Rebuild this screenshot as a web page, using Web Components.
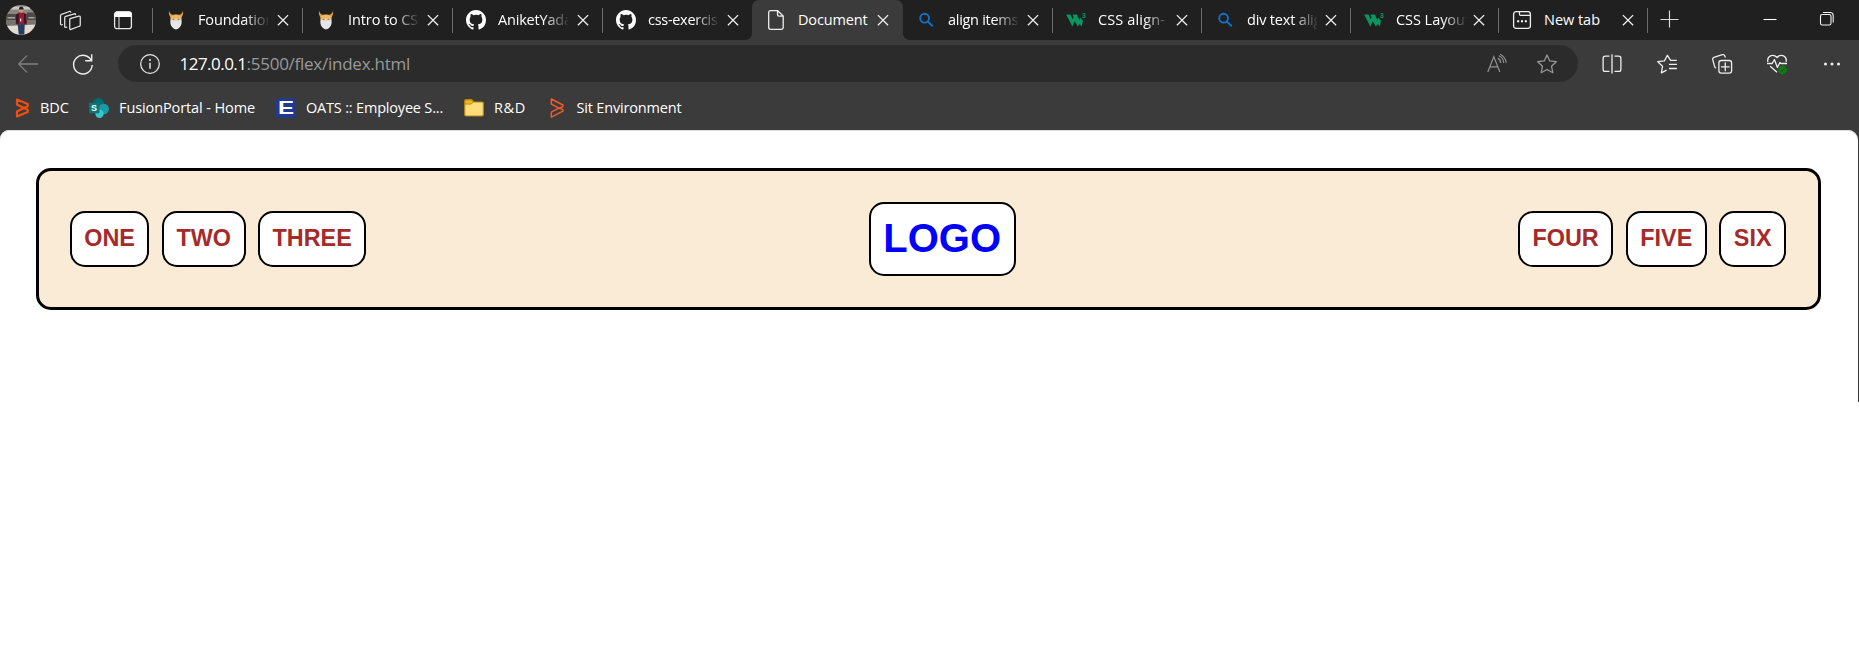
<!DOCTYPE html>
<html lang="en">
<head>
<meta charset="utf-8">
<title>Document</title>
<style>
body{margin:0;background:#fff;font-family:"Open Sans","Noto Sans",sans-serif;overflow:hidden}
</style>
</head>
<body>
<browser-window></browser-window>
<script>
const define=(name,css,html)=>customElements.define(name,class extends HTMLElement{
  constructor(){super();this.attachShadow({mode:'open'}).innerHTML=`<style>${css}</style>${html}`}
});

/* Icon drawings, each on a 20x20 grid */
const ICONS={
  avatar:`<defs><clipPath id="c"><circle cx="10" cy="10" r="10"/></clipPath></defs><g clip-path="url(#c)"><path fill="#8d8781" d="M0 0h20v20H0z"/><path fill="#c9c5c0" d="M3 1h13v2H3z"/><path fill="#4d4947" d="M0 6h7v5H0zM14 5h6v6h-6z"/><path fill="#a9a6a2" d="M1 8h5v1H1zM15 8h4v1h-4z"/><path fill="#77736f" d="M0 10h20v4H0z"/><path fill="#e2dbd2" d="M0 14l20-1V20H0z"/><path fill="#8c1f33" d="M7.200 5.600q3-1.400 5.800 0l.8 7.400H6.800z"/><path fill="#3c1220" d="M6.800 6h1.700v6.500H6.500zM12 6h1.700v6.500H12.200z"/><path fill="#f2e9e6" d="M9.300 9h.9v2h-.9z"/><circle cx="10.200" cy="3.600" r="1.500" fill="#c49a84"/><path fill="#222" d="M8.600 3q.2-2 1.600-2t1.600 2z"/><path fill="#253c5e" d="M7.800 12.800h4.700l-.3 7H8.500z"/></g>`,
  work:`<g fill="none" stroke="#e4e4e4" stroke-width="1.200" stroke-linejoin="round" stroke-linecap="round"><path d="M9.600 8.200l8.400-2.300q1.300-.3 1.300 1v7.400q0 .9-1 1.200l-7.800 3q-1.200.4-1.200-.9V9.300q0-.9.800-1.100z"/><path d="M6.400 16.400l-.9.200q-1 .1-1-.9V7.300q0-.9.900-1.200l8.300-2.500q1-.2 1.200.7M2.200 14l-.7.100q-1 .1-1-.9V5.300q0-.9.900-1.200L9 1.400q1-.3 1.200.6"/></g>`,
  panel:`<rect x="1.600" y="1.900" width="16.800" height="16.800" rx="2.500" fill="none" stroke="#e8e8e8" stroke-width="1.300"/><path d="M1.500 7V4.200q0-2.600 2.600-2.600h11.800q2.600 0 2.600 2.600V7z" fill="#fff"/><path d="M6 7v11.500" stroke="#ddd" stroke-width="1.100"/>`,
  odin:`<path fill="#dd9f45" d="M3 .5q.3 3 3 4.200h8Q16.700 3.500 17 .5q.8 4-1.200 6.800L15.500 10h-11L4.200 7.300Q2.200 4.500 3 .5z"/><path fill="#f2b65a" d="M5 6.500q5-4 10 0l-.8 2.500H5.800z"/><path fill="#ead4bd" d="M5 8.500h10v3H5z"/><path fill="#e6e6e6" d="M4.500 9.500q3 2 5.500 1.500 2.500.5 5.500-1.500.7 5-1.500 7.500-1.800 2.400-4 2.500-2.200-.1-4-2.500-2.200-2.500-1.500-7.500z"/><path fill="#8a6650" d="M6.500 8.700h2v1h-2zM11.500 8.700h2v1h-2z"/>`,
  github:`<path fill="#fff" transform="scale(1.25)" d="M8 0C3.580 0 0 3.580 0 8c0 3.540 2.290 6.530 5.470 7.590.4.070.55-.17.55-.38v-1.490c-2.010.37-2.530-.49-2.690-.94-.09-.23-.48-.94-.82-1.130-.28-.15-.68-.52-.01-.53.63-.01 1.080.58 1.230.82.72 1.210 1.870.87 2.330.66.070-.52.28-.87.51-1.070-1.780-.2-3.640-.89-3.640-3.950 0-.87.31-1.590.82-2.150-.08-.2-.36-1.020.08-2.120 0 0 .67-.21 2.200.82A7.600 7.600 0 0 1 8 3.860c.68 0 1.360.09 2 .27 1.530-1.040 2.200-.82 2.200-.82.44 1.100.16 1.920.08 2.120.51.56.82 1.270.82 2.150 0 3.070-1.870 3.750-3.650 3.950.29.25.54.73.54 1.480v2.200c0 .21.15.46.55.38A8 8 0 0 0 16 8c0-4.420-3.580-8-8-8z"/>`,
  doc:`<path d="M4.500.7h7.200L17.200 6v11.500q0 1.800-1.800 1.800H4.500q-1.800 0-1.800-1.800v-15Q2.700.7 4.500.7zM11.500.9v3.600q0 1.600 1.600 1.600h3.900" fill="none" stroke="#eee" stroke-width="1.300"/>`,
  search:`<g fill="none" stroke="#1272c9" stroke-width="1.900" stroke-linecap="round"><circle cx="8.600" cy="8.200" r="4.400"/><path d="M12 11.700l4.300 4"/></g>`,
  w3:`<path fill="#059862" d="M.2 4.600h4.200l2.200 4.600 1-2-1-2.600h4.200l2.700 5.600 1-2.600 2.400 3.200-1.200 5.700-2.100-2.600-1.700 2.700-3.100-5.400-2.500 5.200z"/><text x="16" y="8" font-family="Liberation Sans,sans-serif" font-size="6.800" font-weight="700" fill="#059862">3</text>`,
  newtab:`<rect x="1.600" y="1.700" width="16.800" height="16.600" rx="2.500" fill="none" stroke="#eee" stroke-width="1.300"/><path d="M7.500 2v2.200q0 1.200 1.200 1.200H18" fill="none" stroke="#eee" stroke-width="1.200"/><path d="M5.200 10.200h2v2h-2zm3.800 0h2v2H9zm3.800 0h2v2h-2z" fill="#fff"/>`,
  close:`<path d="M4.900 5.100l10.200 10.200m0-10.200L4.900 15.300" stroke="#f0f0f0" stroke-width="1.300"/>`,
  plus:`<path d="M10.500 1.500v17M1.500 10.500h18" stroke="#ddd" stroke-width="1.150"/>`,
  min:`<path d="M3.500 10.500h13" stroke="#fff" stroke-width="1.100"/>`,
  restore:`<rect x="3.500" y="5.500" width="10.500" height="10.500" rx="1.800" fill="none" stroke="#f2f2f2" stroke-width="1.100"/><path d="M6 3.500h7.200q3 0 3 3v7" fill="none" stroke="#f2f2f2" stroke-width="1.100"/>`,
  back:`<path d="M20 10H.8M9.300 1.400L.7 10l8.600 8.600" fill="none" stroke="#808080" stroke-width="1.300"/>`,
  reload:`<path d="M18.500 7.100A9.300 9.300 0 1 0 19.200 11M18.700.3v6.500h-6.500" fill="none" stroke="#eee" stroke-width="1.400"/>`,
  info:`<circle cx="10" cy="10" r="9.300" fill="none" stroke="#e8e8e8" stroke-width="1.250"/><path d="M10 8.800v6" stroke="#fff" stroke-width="1.300"/><circle cx="10" cy="6" r=".9" fill="#fff"/>`,
  read:`<path d="M.8 18L6.800 2.600 12.800 18M3 12.800h7.700M10.700 4.400q3 1.300 3 4.600M11.800 1.800q4.700 2 4.900 7.200M13.200.2q5.500 2.800 6 8.600" fill="none" stroke="#929292" stroke-width="1.200"/>`,
  star:`<path d="M10 .9l2.800 6 6.500.8-4.800 4.500 1.300 6.500L10 15.500l-5.800 3.200 1.300-6.500L.7 7.700l6.500-.8z" fill="none" stroke="#999" stroke-width="1.250" stroke-linejoin="round"/>`,
  split:`<path d="M7.500 2.200H3.300Q1.100 2.200 1.100 4.400v10.800q0 2.200 2.200 2.200h4.200M12.500 2.200h4.200q2.200 0 2.200 2.200v10.800q0 2.200-2.200 2.200h-4.200" fill="none" stroke="#eee" stroke-width="1.300"/><path d="M10 .2v19.400" stroke="#eee" stroke-width="1.300"/>`,
  favs:`<path d="M19.800 6.300h-6.200l-3.200-5-3 5.600-6.600.8 4.700 4.600-1.100 6.600 5.200-2.700M12 10.300h7.900M12 14.500h7.900" fill="none" stroke="#eee" stroke-width="1.300" stroke-linejoin="round"/>`,
  coll:`<path d="M4 14.200q-1.200-.6-1.500-2L.7 5.700Q.3 4 1.900 3.300l8.400-2.600q1.900-.5 2.600 1.200l.5 1.600" fill="none" stroke="#eee" stroke-width="1.300"/><rect x="6.900" y="6.500" width="12.700" height="12.700" rx="2.400" fill="none" stroke="#eee" stroke-width="1.300"/><path d="M13.250 8.500v8.700M8.900 12.850h8.700" stroke="#eee" stroke-width="1.300"/>`,
  heart:`<path d="M.8 7.800Q.2 3.500 3.400 1.900 7 .3 10 3.500 13 .3 16.600 1.900q3.200 1.600 2.600 5.900M0 9.500h5.200l2.200-4 3 8 2.500-5 1.100 1H20M3.200 12.200l6.800 6.100" fill="none" stroke="#eee" stroke-width="1.300" stroke-linejoin="round"/><circle cx="15.600" cy="16" r="4.400" fill="#0f7b10"/><path d="M13.500 16.100l1.400 1.400 2.700-2.800" fill="none" stroke="#3a3a3a" stroke-width=".9"/>`,
  dots:`<g fill="#eee"><circle cx="3.500" cy="10" r="1.500"/><circle cx="10" cy="10" r="1.500"/><circle cx="16.500" cy="10" r="1.500"/></g>`,
  bmc:`<path d="M5 1.500l10.700 4.600v2.200L12 10 5 6.400zM5 18.500l10.700-4.600v-2.200L12 10l-7 3.600z" fill="none" stroke="#ee5010" stroke-width="2.200" stroke-linejoin="round"/>`,
  bmcLine:`<path d="M4.300 1l11.600 6v1.600L12 10.200 4.300 6zM4.300 19.200l11.600-6v-1.600L12 10l-7.700 4.200z" fill="none" stroke="#f2592a" stroke-width="1.500" stroke-linejoin="round"/>`,
  share:`<circle cx="9.500" cy="5.500" r="5.500" fill="#036c70"/><circle cx="14.700" cy="11" r="5.300" fill="#1a9ba1"/><circle cx="10.500" cy="15.800" r="4.200" fill="#37c6d0"/><rect y="4.700" width="10.400" height="10.600" rx="1" fill="#03787c"/><text x="5.100" y="13" text-anchor="middle" font-family="Liberation Sans,sans-serif" font-weight="700" font-size="9" fill="#fff">S</text>`,
  oats:`<rect width="20" height="20" rx="2.500" fill="#213a8f"/><text transform="translate(10 16.300) scale(1.300 1)" text-anchor="middle" font-family="Liberation Sans,sans-serif" font-weight="700" font-size="18.500" fill="#fff">E</text>`,
  folder:`<path d="M.7 3q0-1.300 1.300-1.300h5.600L9.700 4H18q1.400 0 1.400 1.400v11.200q0 1.400-1.400 1.400H2Q.7 18 .7 16.600z" fill="#ffdc7c" stroke="#b5860b" stroke-width="1.200"/><path d="M1 3q0-1 1-1h5.500l1.700 2-2 2.100H1z" fill="#f3b916" stroke="#b5860b" stroke-width=".9"/>`
};

customElements.define('ui-icon',class extends HTMLElement{
  connectedCallback(){
    if(this.shadowRoot)return;
    const s=this.getAttribute('size')||20;
    this.attachShadow({mode:'open'}).innerHTML=`<style>:host{display:block;flex:none;width:${s}px;height:${s}px}svg{display:block;overflow:visible}</style><svg width="${s}" height="${s}" viewBox="0 0 20 20">${ICONS[this.getAttribute('name')]}</svg>`;
  }
});

/* Label whose letter spacing is set so that the text takes the given width */
customElements.define('ui-label',class extends HTMLElement{
  connectedCallback(){
    if(this.shadowRoot)return;
    this.attachShadow({mode:'open'}).innerHTML=`<style>:host{display:inline-block;flex:none;white-space:nowrap}</style><slot></slot>`;
    const w=+this.getAttribute('w');
    if(w)this.style.letterSpacing=(w-this.getBoundingClientRect().width)/this.textContent.length+'px';
  }
});

customElements.define('browser-tab',class extends HTMLElement{
  connectedCallback(){
    if(this.shadowRoot)return;
    const a=this.hasAttribute('active'),f=this.hasAttribute('fade');
    this.attachShadow({mode:'open'}).innerHTML=`<style>
    :host{display:flex;position:relative;flex:none;box-sizing:border-box;width:${this.getAttribute('width')||150}px;height:40px;align-items:center;padding-left:14px;color:#fff;font-size:14.5px;line-height:20px}
    :host(:not([active]):not([first-after]))::before{content:"";position:absolute;left:0;top:8px;width:1px;height:25px;background:#6b6b6b}
    :host([active]){background:#3b3b3b;border-radius:7px 7px 0 0;margin-right:-1px}
    .f{position:absolute;bottom:0;width:6px;height:6px}
    .l{left:-6px;background:radial-gradient(circle at 0 0,transparent 5.5px,#3b3b3b 6px)}
    .r{right:-6px;background:radial-gradient(circle at 100% 0,transparent 5.5px,#3b3b3b 6px)}
    .t{width:70px;margin:-1px 0 0 12px;overflow:hidden;flex:none;${f?'-webkit-mask-image:linear-gradient(90deg,#000 46px,transparent 72px);mask-image:linear-gradient(90deg,#000 46px,transparent 72px)':''}}
    .x{margin-left:auto;padding-right:9px}:host([active]) .x{padding-right:10px}</style>
    <ui-icon name="${this.getAttribute('icon')}"></ui-icon><div class="t"><slot></slot></div><ui-icon class="x" name="close"></ui-icon>${a?'<i class="f l"></i><i class="f r"></i>':''}`;
  }
});

define('tab-strip',`:host{display:flex;height:40px;background:#202020;align-items:center;box-sizing:border-box;padding-left:6px}
.tools{display:flex;align-items:center;width:146px;flex:none}.av{margin-left:-.5px}.work{margin-left:24px}.panel{margin-left:32.500px}
.add{margin:-2px 0 0 11px}.win{margin:-2px 22.500px 0 auto;display:flex;gap:37px}`,
`<div class="tools"><ui-icon class="av" name="avatar" size="30"></ui-icon><ui-icon class="work" name="work" size="21"></ui-icon><ui-icon class="panel" name="panel" size="20"></ui-icon></div>
<browser-tab icon="odin" fade><ui-label w="83">Foundations</ui-label></browser-tab>
<browser-tab icon="odin" fade><ui-label w="78">Intro to CSS</ui-label></browser-tab>
<browser-tab icon="github" fade><ui-label w="81">AniketYadav</ui-label></browser-tab>
<browser-tab icon="github" fade><ui-label w="84">css-exercises</ui-label></browser-tab>
<browser-tab icon="doc" width="151" active><ui-label w="69.5">Document</ui-label></browser-tab>
<browser-tab icon="search" fade first-after><ui-label w="70">align items</ui-label></browser-tab>
<browser-tab icon="w3" width="149" fade><ui-label w="67">CSS align-</ui-label></browser-tab>
<browser-tab icon="search" width="149" fade><ui-label w="83">div text align</ui-label></browser-tab>
<browser-tab icon="w3" width="148" fade><ui-label w="74">CSS Layout</ui-label></browser-tab>
<browser-tab icon="newtab" width="149"><ui-label w="56">New tab</ui-label></browser-tab>
<div style="width:1px;height:25px;background:#6b6b6b"></div><ui-icon class="add" name="plus"></ui-icon>
<div class="win"><ui-icon name="min"></ui-icon><ui-icon name="restore"></ui-icon></div>`);

define('address-bar',`:host{display:flex;align-items:center;height:47px;box-sizing:border-box;padding:0 16px 0 18px}
.re{margin-left:35px}.pill{margin-left:25px;width:1460px;height:37px;box-sizing:border-box;border-radius:19px;background:#2b2b2b;display:flex;align-items:center;padding:0 21px 0 22px;flex:none}
.url{margin:0 auto 0 19.500px;font-size:17px;line-height:24px;color:#fff;display:flex}.g{color:#999}.st{margin-left:30px}
.acts{display:flex;gap:35px;margin-left:24px}`,
`<ui-icon name="back"></ui-icon><ui-icon class="re" name="reload"></ui-icon>
<div class="pill"><ui-icon name="info"></ui-icon><div class="url"><ui-label w="67">127.0.0.1</ui-label><ui-label class="g" w="163.5">:5500/flex/index.html</ui-label></div><ui-icon name="read"></ui-icon><ui-icon class="st" name="star"></ui-icon></div>
<div class="acts"><ui-icon name="split"></ui-icon><ui-icon name="favs"></ui-icon><ui-icon name="coll"></ui-icon><ui-icon name="heart"></ui-icon><ui-icon name="dots"></ui-icon></div>`);

define('bookmark-link',`:host{display:flex;align-items:center;gap:10px;color:#fff;font-size:14.5px;line-height:20px}`,`<slot name="icon"></slot><slot></slot>`);
define('bookmarks-bar',`:host{display:flex;align-items:center;height:42px;margin-bottom:1px;padding:0 0 0 12px;box-sizing:border-box}
bookmark-link{flex:none}`,
`<bookmark-link style="width:77px;gap:8px"><ui-icon slot="icon" name="bmc"></ui-icon><ui-label w="29">BDC</ui-label></bookmark-link>
<bookmark-link style="width:187px"><ui-icon slot="icon" name="share"></ui-icon><ui-label w="136">FusionPortal - Home</ui-label></bookmark-link>
<bookmark-link style="width:188px"><ui-icon slot="icon" name="oats"></ui-icon><ui-label w="137">OATS :: Employee S...</ui-label></bookmark-link>
<bookmark-link style="width:82.500px"><ui-icon slot="icon" name="folder"></ui-icon><ui-label w="32">R&amp;D</ui-label></bookmark-link>
<bookmark-link><ui-icon slot="icon" name="bmcLine"></ui-icon><ui-label w="105">Sit Environment</ui-label></bookmark-link>`);

define('nav-item',`:host{display:block;box-sizing:border-box;height:56px;border:2px solid #000;border-radius:15px;background:#fff;padding:0 12.5px;font:700 23.4px/50px "Liberation Sans",Arial,sans-serif;color:#a52a2a;white-space:nowrap}
:host([logo]){height:74px;font-size:40px;line-height:68px;color:#00f}`,`<slot></slot>`);
define('nav-group',`:host{display:flex;gap:12.5px}`,`<slot></slot>`);
define('flex-header',`:host{display:flex;justify-content:space-between;align-items:center;box-sizing:border-box;height:142px;border:3px solid #000;border-radius:15px;background:#faebd7;padding:0 32px 0 30.75px}`,`<slot></slot>`);
define('page-view',`:host{display:block;box-sizing:border-box;height:272px;margin-right:1px;background:#fff;border-radius:9px 10px 0 0;padding:38px 37px 0 36px;box-shadow:inset 0 1px 0 #ddd}`,`<slot></slot>`);

define('browser-window',`:host{display:block;height:402px;background:#3b3b3b}`,
`<tab-strip></tab-strip><address-bar></address-bar><bookmarks-bar></bookmarks-bar>
<page-view><flex-header>
<nav-group><nav-item>ONE</nav-item><nav-item>TWO</nav-item><nav-item>THREE</nav-item></nav-group>
<nav-item logo>LOGO</nav-item>
<nav-group><nav-item>FOUR</nav-item><nav-item>FIVE</nav-item><nav-item>SIX</nav-item></nav-group>
</flex-header></page-view>`);
</script>
</body>
</html>
